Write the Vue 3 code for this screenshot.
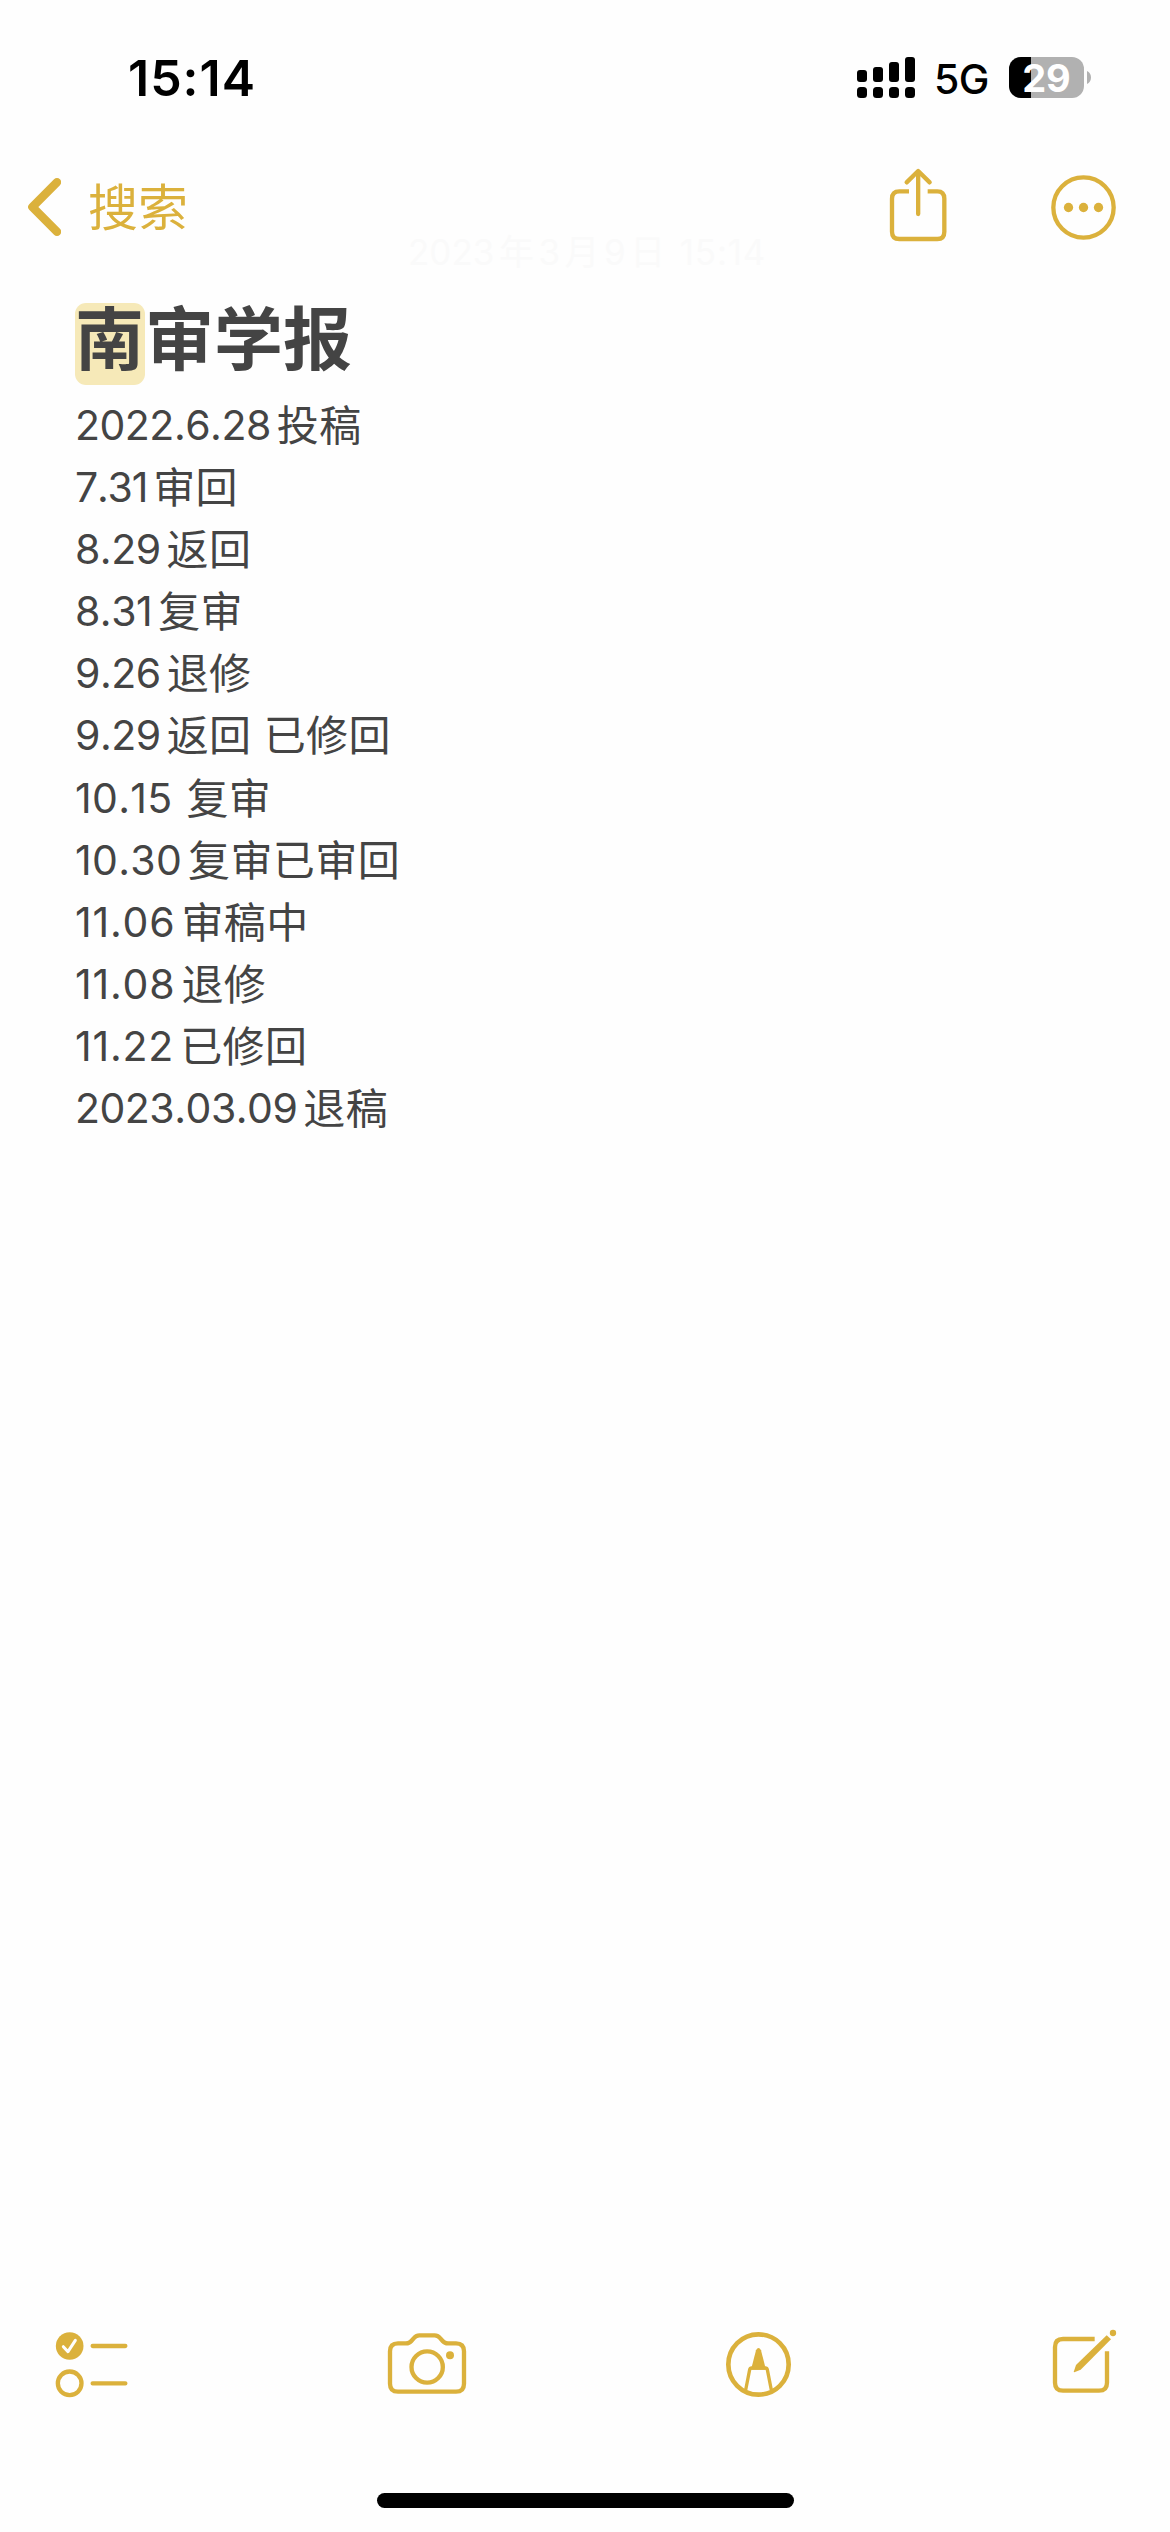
<template>
  <div class="phone">
    <!-- 状态栏 -->
    <div class="status-bar">
      <span class="time">15:14</span>
      <div class="status-right">
        <svg class="signal" viewBox="0 0 58 41">
          <rect v-for="(bar, i) in bars" :key="'t' + i" :x="i * 16" :y="bar" width="10" :height="25 - bar" rx="3" />
          <rect v-for="(bar, i) in bars" :key="'b' + i" :x="i * 16" y="30" width="10" height="11" rx="3.5" />
        </svg>
        <span class="network">5G</span>
        <div class="battery">
          <div class="battery-level" :style="{ width: battery + '%' }"></div>
          <span class="battery-text">{{ battery }}</span>
        </div>
        <svg class="battery-cap" viewBox="0 0 4 13">
          <path d="M0 0C2.4 1 4 3.4 4 6.5S2.4 12 0 13Z" />
        </svg>
      </div>
    </div>

    <!-- 导航栏 -->
    <div class="nav-bar">
      <div class="back">
        <svg class="chevron" viewBox="0 0 33 58">
          <path d="M29 4.2L4.4 29L29 53.8" />
        </svg>
        <span class="back-text">搜索</span>
      </div>
      <div class="nav-actions">
        <svg class="share" viewBox="195 390 201 261">
          <path d="M267 484H238Q216 484 216 506V605Q216 627 238 627H352Q373 627 373 605V506Q373 484 352 484H323" />
          <path class="round" d="M294.500 424V552M260 457L294.500 423L329 457" />
        </svg>
        <svg class="more" viewBox="675 390 231 261">
          <circle cx="790.500" cy="532.500" r="90.500" />
          <circle class="dot" cx="745.500" cy="532.500" r="14" />
          <circle class="dot" cx="790.500" cy="532.500" r="14" />
          <circle class="dot" cx="835.500" cy="532.500" r="14" />
        </svg>
      </div>
    </div>
    <div class="note-date">
      <span>2023</span><b>年</b><span>3</span><b>月</b><span>9</span><b>日</b><span class="note-time">15:14</span>
    </div>

    <!-- 正文 -->
    <div class="note">
      <h1 class="title"><mark>南</mark>审学报</h1>
      <div class="row" v-for="(item, index) in records" :key="index">
        <span class="date" :class="dateClass(item.date)">{{ item.date }}</span>
        <span class="text" :class="{ spaced: item.spaced }">{{ item.text }}</span>
      </div>
    </div>

    <!-- 底部工具栏 -->
    <div class="toolbar">
      <svg viewBox="30 0 390 390">
        <circle class="fill" cx="119" cy="138" r="41.500" />
        <path class="check" d="M100 140L114 155L136 121" />
        <circle cx="119" cy="250" r="35.500" />
        <path class="round" d="M188 138H286M188 250H286" />
      </svg>
      <svg viewBox="0 0 390 390">
        <path d="M84 130H108Q118 130 124 123L133 113Q139 106 148 106H194Q203 106 209 113L218 123Q224 130 234 130H258Q282 130 282 154V251Q282 275 258 275H84Q60 275 60 251V154Q60 130 84 130Z" />
        <circle cx="171.500" cy="201" r="47" />
        <circle class="fill" cx="240" cy="166" r="12" />
      </svg>
      <svg viewBox="0 0 390 390">
        <circle class="ring" cx="175.500" cy="193.500" r="90.500" />
        <path class="pen" d="M137 270L149 209Q150 204 155 204H196Q201 204 202 209L214 270" />
        <path class="fill" d="M153 209L168 151Q175.500 137 183 151L198 209Z" />
      </svg>
      <svg viewBox="0 0 390 390">
        <path d="M194 117H99Q75 117 75 141V248Q75 272 99 272H207Q231 272 231 248V154" />
        <path class="gap" d="M145 203L262 88" />
        <path class="fill" d="M131 216L138 195L230 106L243 118L152 209L133 217Z" />
        <circle class="fill" cx="249" cy="99" r="9.500" />
      </svg>
    </div>
    <div class="home-indicator"></div>
  </div>
</template>

<script setup>
import { ref } from 'vue';

// 电量
const battery = ref(29);

// 信号格的顶部位置
const bars = [13, 10, 5, 0];

// 投稿记录
const records = ref([
  { date: '2022.6.28', text: '投稿' },
  { date: '7.31', text: '审回' },
  { date: '8.29', text: '返回' },
  { date: '8.31', text: '复审' },
  { date: '9.26', text: '退修' },
  { date: '9.29', text: '返回 已修回' },
  { date: '10.15', text: '复审', spaced: true },
  { date: '10.30', text: '复审已审回' },
  { date: '11.06', text: '审稿中' },
  { date: '11.08', text: '退修' },
  { date: '11.22', text: '已修回' },
  { date: '2023.03.09', text: '退稿' },
]);

// 数字 1 较窄，按开头调整字距
const dateClass = (date) => {
  if (date.startsWith('11')) return 'loose';
  if (date.startsWith('10')) return 'normal';
  if (date.startsWith('7')) return 'tight';
  return '';
};
</script>

<style>
body {
  background: #fefefe;
}
</style>

<style scoped>
.phone {
  width: 1170px;
  height: 2532px;
  display: flex;
  flex-direction: column;
  background: #fefefe;
  font-family: Inter, "Noto Sans CJK SC", sans-serif;
  color: #444;
  overflow: hidden;
}

.status-bar {
  height: 156px;
  box-sizing: border-box;
  padding: 48px 79px 0 128px;
  display: flex;
  justify-content: space-between;
  color: #000;
}

.time {
  font-size: 50px;
  font-weight: 600;
  line-height: 60px;
  letter-spacing: 1px;
}

.status-right {
  display: flex;
  align-items: center;
  height: 41px;
  margin-top: 9px;
}

.signal {
  width: 58px;
  height: 41px;
}

.network {
  width: 76px;
  box-sizing: border-box;
  padding-left: 1px;
  margin-left: 18px;
  font-size: 41px;
  font-weight: 500;
  line-height: 41px;
  padding-top: 3px;
  letter-spacing: -0.5px;
}

.battery {
  position: relative;
  width: 75px;
  height: 41px;
  border-radius: 12px;
  background: #b1b1b1;
}

.battery-level {
  height: 100%;
  border-radius: 12px 0 0 12px;
  background: #000;
}

.battery-text {
  position: absolute;
  inset: 0;
  text-align: center;
  font-size: 38px;
  font-weight: 700;
  line-height: 42px;
  color: #fff;
}

.battery-cap {
  width: 4px;
  height: 13px;
  margin-left: 3px;
  fill: #b1b1b1;
}

.nav-bar {
  height: 78px;
  box-sizing: border-box;
  display: flex;
  justify-content: space-between;
  padding: 4px 48px 0 28px;
  color: #dbb13c;
}

.back {
  display: flex;
  align-items: flex-start;
}

.chevron {
  width: 33px;
  height: 58px;
  margin-top: 18px;
  fill: none;
  stroke: #dbb13c;
  stroke-width: 8.4;
  stroke-linecap: round;
  stroke-linejoin: round;
}

.back-text {
  margin-left: 27px;
  margin-top: 18px;
  font-size: 50px;
  line-height: 60px;
}

.nav-actions {
  display: flex;
}

.nav-actions svg {
  height: 87px;
  fill: none;
  stroke: #dbb13c;
  stroke-width: 13;
}

.share {
  width: 67px;
}

.more {
  width: 77px;
  margin-left: 93px;
}

.nav-actions .dot {
  fill: #dbb13c;
  stroke: none;
}

.round {
  stroke-linecap: round;
  stroke-linejoin: round;
}

.note-date {
  height: 36px;
  padding-left: 408px;
  display: flex;
  align-items: center;
  font-size: 35px;
  line-height: 36px;
  color: #fafafa;
}

.note-date b {
  font-weight: 400;
  margin: 0 4.5px;
}

.note-time {
  margin-left: 10px;
  letter-spacing: 0.8px;
}

.note {
  flex: 1;
  padding: 33px 75px 0;
}

.title {
  margin: 0 0 9px;
  height: 82px;
  display: flex;
  font-family: "Noto Sans CJK SC", sans-serif;
  font-size: 69px;
  font-weight: 700;
  line-height: 65px;
}

.title mark {
  width: 70px;
  height: 82px;
  border-radius: 11px;
  background: #f6e9b8;
  color: inherit;
}

.row {
  height: 62.1px;
  display: flex;
}

.date {
  font-size: 41px;
  line-height: 62px;
  font-kerning: none;
  letter-spacing: -0.5px;
}

.date.tight {
  letter-spacing: -1.2px;
}

.date.normal {
  letter-spacing: 0.3px;
}

.date.loose {
  letter-spacing: 0.8px;
}

.text {
  margin-left: 6px;
  font-size: 42px;
  line-height: 63px;
  letter-spacing: 0.4px;
}

.text.spaced {
  margin-left: 14px;
}

.toolbar {
  display: flex;
  justify-content: space-between;
  padding: 0 10px 0 40px;
  height: 193px;
}

.toolbar svg {
  width: 130px;
  height: 130px;
  fill: none;
  stroke: #dbb13c;
  stroke-width: 13;
}

.toolbar .fill {
  fill: #dbb13c;
  stroke: none;
}

.toolbar .check {
  stroke: #fefefe;
  stroke-width: 9;
  stroke-linecap: round;
  stroke-linejoin: round;
}

.toolbar .ring {
  stroke-width: 14;
}

.toolbar .pen {
  stroke-width: 10;
}

.toolbar .gap {
  stroke: #fefefe;
  stroke-width: 38;
}

.home-indicator {
  width: 417px;
  height: 15px;
  margin: 0 auto 24px;
  border-radius: 8px;
  background: #000;
}
</style>
